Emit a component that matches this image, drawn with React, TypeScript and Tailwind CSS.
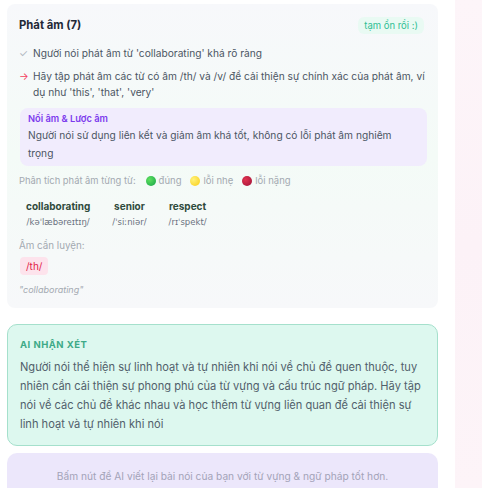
const words = [
  { word: "collaborating", ipa: "/kəˈlæbəreɪtɪŋ/" },
  { word: "senior", ipa: "/ˈsiːniər/" },
  { word: "respect", ipa: "/rɪˈspekt/" },
];

const legend = [
  { label: "đúng", dot: "bg-[radial-gradient(circle_at_35%_35%,#5ee05e,#16a34a)]" },
  { label: "lỗi nhẹ", dot: "bg-[radial-gradient(circle_at_35%_35%,#fff27a,#facc15)]" },
  { label: "lỗi nặng", dot: "bg-[radial-gradient(circle_at_35%_35%,#e0324f,#9f1239)]" },
];

export default function App() {
  return (
    <div className="flex h-[488px] w-[482px] overflow-hidden bg-white font-['Inter','Noto_Sans',sans-serif]">
      <div className="flex w-[438px] shrink-0 flex-col pl-[7px] pt-[4px]">
        {/* Phát âm card */}
        <div className="rounded-lg bg-linear-to-b from-[#f7f8fb] via-[#f4fbf7] to-[#f7f8fa] pl-[12px] pr-[11px] pt-[11px] pb-[10px]">
          <div className="flex items-center justify-between">
            <h3 className="text-[11.3px] leading-[20px] font-bold text-[#1f2937]">Phát âm (7)</h3>
            <span className="mr-[3px] rounded-md bg-[#e9faf3] px-[6px] py-[1px] text-[9.5px] leading-[15px] text-[#2fbf93]">
              tạm ổn rồi :)
            </span>
          </div>

          <div className="mt-[10px] flex gap-[5px] text-[10.2px] leading-[17px] text-[#4b5563]">
            <span className="w-[9px] text-[#b0b6bf]">✓</span>
            <p>Người nói phát âm từ 'collaborating' khá rõ ràng</p>
          </div>
          <div className="mt-[6px] flex gap-[5px] text-[10.2px] leading-[16px] text-[#4b5563]">
            <span className="w-[9px] text-[#f43f5e]">→</span>
            <p>Hãy tập phát âm các từ có âm /th/ và /v/ để cải thiện sự chính xác của phát âm, ví dụ như 'this', 'that', 'very'</p>
          </div>

          <div className="mt-[8px] ml-[1px] rounded-lg bg-[#f1ecfd] px-[8px] pt-[4px] pb-[4px]">
            <p className="text-[9.3px] leading-[14px] font-semibold text-[#7c3aed]">Nối âm &amp; Lược âm</p>
            <p className="text-[10.2px] leading-[18px] text-[#4b5563]">
              Người nói sử dụng liên kết và giảm âm khá tốt, không có lỗi phát âm nghiêm trọng
            </p>
          </div>

          <div className="mt-[7px] flex items-center text-[9.5px] leading-[16px] text-[#a3a9b1]">
            <span className="mr-[10px] text-[9.4px]">Phân tích phát âm từng từ:</span>
            {legend.map((l) => (
              <span key={l.label} className="mr-[9px] flex items-center gap-[3px]">
                <span className={`h-[10px] w-[10px] rounded-full ${l.dot}`} />
                <span>{l.label}</span>
              </span>
            ))}
          </div>

          <div className="mt-[9px] ml-[7px] flex gap-[22px]">
            {words.map((w) => (
              <div key={w.word} className="flex flex-col items-center">
                <span className="text-[10px] leading-[16px] font-bold text-[#2f4a3c]">{w.word}</span>
                <span className="mt-[2px] text-[8.5px] leading-[13px] text-[#6b7280] font-['DejaVu_Sans',sans-serif]">{w.ipa}</span>
              </div>
            ))}
          </div>

          <p className="mt-[9px] text-[9.8px] leading-[16px] text-[#a3a9b1]">Âm cần luyện:</p>
          <div className="mt-[3px] flex">
            <span className="ml-[1px] rounded bg-[#fde3ec] px-[6px] text-[10px] leading-[18px] text-[#e11d48]">/th/</span>
          </div>
          <p className="mt-[7px] text-[9px] leading-[16px] italic text-[#a3a9b1]">"collaborating"</p>
        </div>

        {/* AI nhận xét */}
        <div className="mt-[16px] rounded-[10px] border border-[#a5e0cc] bg-[#ddf8ef] pl-[12px] pr-[10px] pt-[12px] pb-[11px]">
          <p className="text-[9.5px] leading-[16px] font-bold tracking-wider text-[#3daa87]">AI NHẬN XÉT</p>
          <p className="mt-[5px] text-[11.1px] leading-[19px] text-[#51606b]">
            Người nói thể hiện sự linh hoạt và tự nhiên khi nói về chủ đề quen thuộc, tuy nhiên cần cải thiện sự phong phú của từ vựng và cấu trúc ngữ pháp. Hãy tập nói về các chủ đề khác nhau và học thêm từ vựng liên quan để cải thiện sự linh hoạt và tự nhiên khi nói
          </p>
        </div>

        <div className="mt-[7px] flex-1 rounded-t-[10px] bg-[#ece7fb] pt-[15px] text-center">
          <p className="text-[10.2px] leading-[16px] text-[#a3a3b8]">
            Bấm nút để AI viết lại bài nói của bạn với từ vựng &amp; ngữ pháp tốt hơn.
          </p>
        </div>
      </div>
      <div className="w-[17px] shrink-0" />
      <div className="flex-1 bg-linear-to-b from-[#fdf5f9] via-[#fcf2f7] to-[#fdf4f8]" />
    </div>
  );
}
